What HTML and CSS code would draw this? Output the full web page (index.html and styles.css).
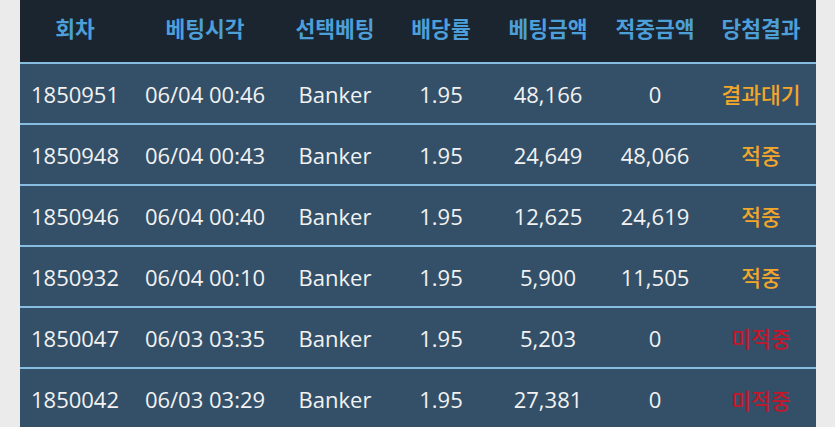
FILE: index.html
```html
<!DOCTYPE html>
<html lang="ko">
<head>
<meta charset="utf-8">
<link rel="stylesheet" href="styles.css">
</head>
<body>
<div class="wrap">
<table class="bets">
  <colgroup>
    <col class="c1"><col class="c2"><col class="c3"><col class="c4"><col class="c5"><col class="c6"><col class="c7">
  </colgroup>
  <thead>
    <tr><th>회차</th><th>베팅시각</th><th>선택베팅</th><th>배당률</th><th>베팅금액</th><th>적중금액</th><th>당첨결과</th></tr>
  </thead>
  <tbody>
    <tr><td>1850951</td><td>06/04 00:46</td><td>Banker</td><td>1.95</td><td>48,166</td><td>0</td><td class="res wait">결과대기</td></tr>
    <tr><td>1850948</td><td>06/04 00:43</td><td>Banker</td><td>1.95</td><td>24,649</td><td>48,066</td><td class="res win">적중</td></tr>
    <tr><td>1850946</td><td>06/04 00:40</td><td>Banker</td><td>1.95</td><td>12,625</td><td>24,619</td><td class="res win">적중</td></tr>
    <tr><td>1850932</td><td>06/04 00:10</td><td>Banker</td><td>1.95</td><td>5,900</td><td>11,505</td><td class="res win">적중</td></tr>
    <tr><td>1850047</td><td>06/03 03:35</td><td>Banker</td><td>1.95</td><td>5,203</td><td>0</td><td class="res lose">미적중</td></tr>
    <tr><td>1850042</td><td>06/03 03:29</td><td>Banker</td><td>1.95</td><td>27,381</td><td>0</td><td class="res lose">미적중</td></tr>
  </tbody>
</table>
</div>
</body>
</html>
```

FILE: styles.css
```css
html, body {
  margin: 0;
  padding: 0;
  background: #ebebeb;
  overflow: hidden;
}
.wrap {
  padding: 0 19px 0 20px;
}
.bets {
  width: 100%;
  border-collapse: collapse;
  table-layout: fixed;
  font-family: "Open Sans", "Noto Sans CJK KR", sans-serif;
}
.c1 { width: 110px; }
.c2 { width: 150px; }
.c3 { width: 110px; }
.c4 { width: 102px; }
.c5 { width: 112px; }
.c6 { width: 102px; }
.c7 { width: 110px; }
.bets thead tr {
  background: #1b2530;
  height: 63px;
}
.bets th {
  padding: 0 0 8px 0;
  font-family: "Noto Sans CJK KR", sans-serif;
  font-weight: 700;
  font-size: 21.5px;
  color: #4c9fd9;
  text-align: center;
  vertical-align: middle;
}
.bets tbody tr {
  background: #345068;
  height: 61px;
  border-top: 2px solid #86bde0;
}
.bets td {
  padding: 0;
  font-size: 22px;
  color: #f2f2f2;
  text-align: center;
  vertical-align: middle;
}
.bets td.res {
  font-family: "Noto Sans CJK KR", sans-serif;
  font-size: 21.5px;
  font-weight: 500;
}
.wait, .win { color: #f2a62a !important; }
.lose { color: #c4162a !important; }
```
